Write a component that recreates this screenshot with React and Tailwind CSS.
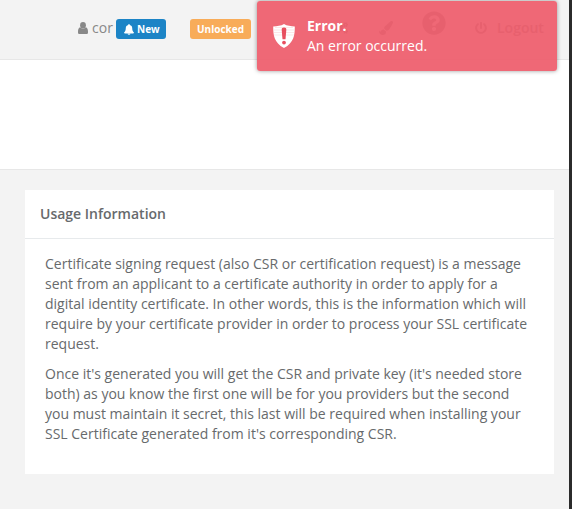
import { FaCogs, FaPaintBrush, FaPowerOff, FaQuestionCircle } from 'react-icons/fa';

function UserIcon() {
  return (
    <svg viewBox="0 0 10 12" className="w-[10px] h-3 shrink-0" fill="currentColor">
      <ellipse cx="5" cy="3.3" rx="2.9" ry="3.3" />
      <path d="M2.2 5.2C.7 5.5 0 7.2 0 9.700v.7C0 11.400.7 12 1.600 12h6.800c.9 0 1.600-.6 1.600-1.600v-.7C10 7.200 9.300 5.500 7.800 5.200 7 6.100 6.100 6.600 5 6.600S3 6.100 2.200 5.200Z" />
    </svg>
  );
}

function BellIcon() {
  return (
    <svg viewBox="0 0 10 11" className="w-[10px] h-[11px] mr-[3px] shrink-0" fill="currentColor">
      <path d="M5 0c.5 0 .8.4.8.9C7.3 1.2 8.2 2.4 8.2 4c0 2.3.6 3.7 1.8 4.600 0 .5-.3.8-.8.8H.8C.3 9.400 0 9.100 0 8.600 1.200 7.700 1.800 6.300 1.800 4c0-1.600.9-2.800 2.400-3.100C4.200.4 4.500 0 5 0Z" />
      <path d="M3.600 9.400h2.800a1.400 1.400 0 0 1-2.800 0Z" />
    </svg>
  );
}

function ShieldIcon() {
  return (
    <svg viewBox="0 0 22 24" className="w-[22px] h-6 shrink-0">
      <path
        d="M11 0C8 1.8 4 2.4.2 2.4C.2 11 1 18.5 11 24C21 18.5 21.8 11 21.8 2.4C18 2.4 14 1.8 11 0Z"
        fill="#fff"
      />
      <path d="M11 3.6c1.7 0 2.400.8 2.300 2.400L12.500 15.200h-3L8.700 6C8.600 4.400 9.300 3.600 11 3.600Z" fill="#e84e5f" />
      <circle cx="11" cy="18.6" r="1.9" fill="#e84e5f" />
      <path d="M2 3.5h18M1 6h20M1 8.5h20M1 11h20" stroke="#ee5f6e" strokeOpacity="0.15" />
    </svg>
  );
}

function Toast() {
  return (
    <div className="absolute left-[257px] top-px w-[300px] h-[70px] rounded-[3px] bg-[#ee5d6c]/93 shadow-[0_0_4px_rgba(0,0,0,0.4)] text-white flex items-start">
      <div className="pl-4 pt-[23px]">
        <ShieldIcon />
      </div>
      <div className="pl-3 pt-[15px]">
        <p className="font-bold">Error.</p>
        <p>An error occurred.</p>
      </div>
    </div>
  );
}

function Topbar() {
  return (
    <header className="h-[60px] border-b border-[#e7e7e7] flex items-start text-[#888]">
      <div className="flex items-center pl-[78px] pt-[18px] h-[38px]">
        <UserIcon />
        <span className="ml-[4px] w-[24px]">cor</span>
        <span className="w-[50px] h-5 mt-[2px] rounded-[3px] bg-[#1c84c6] text-white text-[10px] leading-5 font-bold flex items-center pl-2">
          <BellIcon />
          New
        </span>
        <span className="w-[61px] h-5 mt-[2px] ml-6 rounded-[3px] bg-[#f8ac59] text-white text-[10px] leading-5 font-bold text-center">
          Unlocked
        </span>
      </div>
      <div className="flex items-center pt-[18px] h-[38px] pl-[83px] font-semibold">
        <FaCogs className="w-[14px] h-[14px]" />
        <FaPaintBrush className="w-[14px] h-[14px] ml-[31px]" />
        <FaQuestionCircle className="w-6 h-6 ml-[29px] -mt-[10px]" />
        <FaPowerOff className="w-3 h-3 ml-[29px]" />
        <span className="ml-[10px]">Logout</span>
      </div>
    </header>
  );
}

export default function App() {
  return (
    <div className="relative w-[572px] h-[509px] overflow-hidden bg-[#f3f3f3] border-r-[3px] border-[#2b2b2b] text-[14px] leading-5 text-[#676a6c] font-['Open_Sans',sans-serif]">
      <Topbar />
      <div className="h-[110px] bg-white border-b border-[#e7e7e7]" />

      <section className="mt-5 ml-[25px] w-[529px] h-[284px] bg-white">
        <div className="h-[49px] border-b border-[#e7eaec] px-[15px] pt-[14px]">
          <h5 className="font-semibold">Usage Information</h5>
        </div>
        <div className="px-5 pt-[15px]">
          <p className="mb-[10px]">
            Certificate signing request (also CSR or certification request) is a message
            <br />
            sent from an applicant to a certificate authority in order to apply for a
            <br />
            digital identity certificate. In other words, this is the information which will
            <br />
            require by your certificate provider in order to process your SSL certificate
            <br />
            request.
          </p>
          <p>
            Once it's generated you will get the CSR and private key (it's needed store
            <br />
            both) as you know the first one will be for you providers but the second
            <br />
            you must maintain it secret, this last will be required when installing your
            <br />
            SSL Certificate generated from it's corresponding CSR.
          </p>
        </div>
      </section>

      <Toast />
    </div>
  );
}
